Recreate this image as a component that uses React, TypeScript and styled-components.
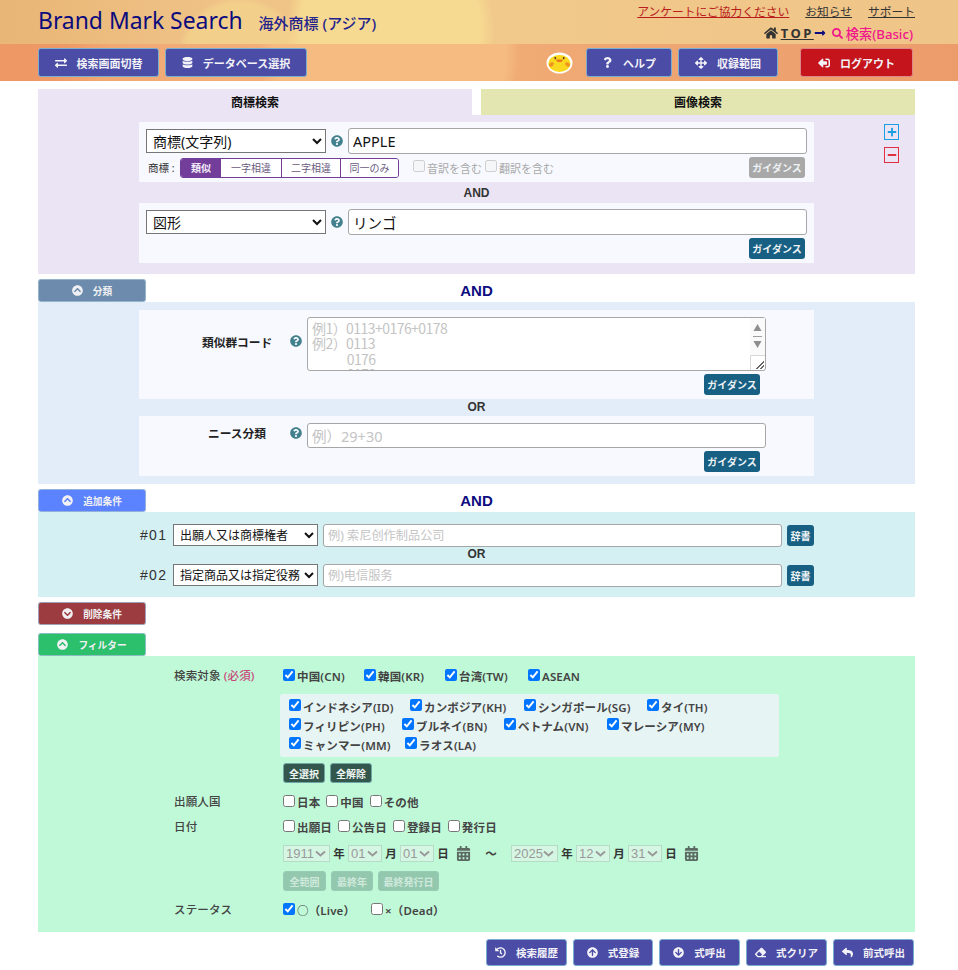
import React from 'react';
import styled, {createGlobalStyle} from 'styled-components';
import {
    FaArrowCircleDown, FaArrowCircleUp, FaArrowsAlt, FaCalendarAlt, FaChevronCircleDown, FaChevronCircleUp,
    FaDatabase, FaEraser, FaExchangeAlt, FaHistory, FaHome, FaLongArrowAltRight, FaMinus, FaPlus, FaQuestion,
    FaQuestionCircle, FaReply, FaSearch, FaSignOutAlt,
} from 'react-icons/fa';

const FONT = `"Noto Sans", "Noto Sans CJK JP", sans-serif`;

const GlobalStyle = createGlobalStyle`
    html, body {
        margin: 0;
        padding: 0;
        background: #fff;
    }

    body {
        font-family: ${FONT};
        color: #333;
    }

    * {
        box-sizing: border-box;
    }
`;

const Chick = () => (
    <svg width="27" height="22" viewBox="0 0 27 22">
        <ellipse cx="13.5" cy="11" rx="13" ry="10.5" fill="#fff"/>
        <ellipse cx="13.5" cy="11.5" rx="11" ry="8.5" fill="#fbd820"/>
        <path d="M2.8 13 C4 9.5 7 9.5 8 11.5 C7 15 4 16 2.8 13Z" fill="#ef9420"/>
        <path d="M24.2 13 C23 9.5 20 9.5 19 11.5 C20 15 23 16 24.2 13Z" fill="#ef9420"/>
        <rect x="8.5" y="5" width="1.6" height="2.2" fill="#5a4020"/>
        <rect x="16.9" y="5" width="1.6" height="2.2" fill="#5a4020"/>
        <path d="M9.8 7.5 H17.2 L15.5 10 H11.5Z" fill="#e87818"/>
    </svg>
);

const HeaderTop = styled.header`
    height: 44px;
    padding: 0 43px 0 38px;
    display: flex;
    justify-content: space-between;
    background:
        radial-gradient(circle at 390px 30px, #f7da92 0 90px, transparent 104px),
        radial-gradient(circle at 240px 60px, #f3cf8c 0 56px, transparent 64px),
        linear-gradient(90deg, #e8b676 0%, #eec083 18%, #f1ca8b 50%, #efc488 100%);
`;

const Brand = styled.div`
    display: flex;
    align-items: baseline;
    padding-top: 5px;
`;

const BrandName = styled.span`
    font-size: 22.9px;
    line-height: 32px;
    color: #0b0b7d;
`;

const BrandSub = styled.span`
    margin-left: 16px;
    font-size: 15px;
    font-weight: 500;
    color: #24248c;
`;

const HeaderRight = styled.div`
    display: flex;
    flex-direction: column;
    align-items: flex-end;
    padding-top: 1px;
`;

const TopLinks = styled.div`
    display: flex;
    gap: 16px;
    font-size: 11.75px;
    line-height: 20px;
`;

const TopLink = styled.a<{ $red?: boolean }>`
    color: ${p => (p.$red ? '#b81c1c' : '#333')};
    text-decoration: underline;
`;

const Crumbs = styled.div`
    display: flex;
    align-items: center;
    margin-top: 3px;
    padding-right: 2px;
    height: 18px;
    font-size: 13px;
    font-weight: 700;
    color: #333;
`;

const CrumbTop = styled.span`
    margin-left: 3px;
    letter-spacing: 2.5px;
    text-decoration: underline;
`;

const CrumbHere = styled.span`
    display: inline-flex;
    align-items: center;
    gap: 3px;
    margin-left: 6px;
    color: #f0168c;
    font-size: 13.2px;
    font-weight: 500;
`;

const HeaderBar = styled.nav`
    height: 37px;
    padding: 4px 45px 4px 38px;
    display: flex;
    align-items: stretch;
    background:
        radial-gradient(circle at 20px 0, #ee9866 0 40px, transparent 90px),
        radial-gradient(circle at 390px 10px, #f5bb80 0 116px, transparent 130px),
        linear-gradient(90deg, #f0a470 0%, #f3b27c 35%, #f0aa74 55%, #ec9c6b 100%);
`;

const BarGroup = styled.div`
    display: flex;
    gap: 6px;
    align-items: stretch;
`;

const LogoutGroup = styled(BarGroup)`
    margin-left: 22px;
`;

const Spacer = styled.div`
    flex: 1;
`;

const ChickHolder = styled.div`
    display: flex;
    align-items: center;
    margin-right: 13px;
`;

const NavButton = styled.button<{ $width: number; $danger?: boolean }>`
    width: ${p => p.$width}px;
    display: flex;
    align-items: center;
    justify-content: center;
    gap: 10px;
    padding: 0;
    border: 1px solid ${p => (p.$danger ? '#d88' : '#78aed0')};
    border-radius: 3px;
    background: ${p => (p.$danger ? '#c5141c' : '#4b4ca5')};
    color: #f2f2f8;
    font-family: ${FONT};
    font-size: 11px;
    font-weight: 700;
`;

const LogoutIcon = styled(FaSignOutAlt)`
    transform: scaleX(-1);
`;

const Main = styled.main`
    width: 877px;
    margin-left: 38px;
`;

const Tabs = styled.div`
    margin-top: 8px;
    display: flex;
    justify-content: space-between;
`;

const Tab = styled.div<{ $bg: string }>`
    width: 434px;
    height: 26px;
    display: flex;
    align-items: center;
    justify-content: center;
    background: ${p => p.$bg};
    font-size: 12px;
    font-weight: 700;
    color: #111;
`;

const Panel = styled.section<{ $bg: string; $height: number }>`
    height: ${p => p.$height}px;
    background: ${p => p.$bg};
    padding-left: 101px;
`;

const TrademarkPanel = styled(Panel)`
    display: flex;
    padding-top: 7px;
`;

const ClassPanel = styled(Panel)`
    padding-top: 8px;
`;

const Column = styled.div`
    width: 675px;
`;

const Box = styled.div<{ $height: number }>`
    height: ${p => p.$height}px;
    background: #f7f9fe;
    padding: 6px 7px 0;
`;

const Row = styled.div`
    display: flex;
    align-items: center;
`;

const FieldSelect = styled.select`
    width: 180px;
    height: 24px;
    font-family: ${FONT};
    font-size: 14px;
    color: #111;
    background: #fff;
    border: 1px solid #767676;
    padding: 0 0 0 2px;
`;

const HelpIcon = styled.span`
    display: inline-flex;
    margin: 0 5px 0 5px;
    color: #41808c;
    font-size: 12px;
`;

const TextField = styled.input`
    height: 26px;
    flex: 1;
    min-width: 0;
    border: 1px solid #a6a6a6;
    border-radius: 3px;
    padding: 0 4px;
    font-family: ${FONT};
    font-size: 14.5px;
    color: #111;
    background: #fff;

    &::placeholder {
        color: #c4c4c4;
    }
`;

const OptionRow = styled.div`
    display: flex;
    align-items: center;
    height: 23px;
    margin-top: 2px;
    font-size: 11px;
`;

const OptionLabel = styled.span`
    width: 34px;
    padding-left: 2px;
    color: #333;
    font-size: 10.5px;
    white-space: nowrap;
`;

const Segments = styled.div`
    display: flex;
    height: 20px;
    border: 1px solid #723e9a;
    border-radius: 3px;
    overflow: hidden;
    background: #fff;
`;

const Segment = styled.span<{ $on?: boolean; $width: number }>`
    width: ${p => p.$width}px;
    display: flex;
    align-items: center;
    justify-content: center;
    font-size: 10px;
    font-weight: ${p => (p.$on ? 700 : 400)};
    color: ${p => (p.$on ? '#f3eef8' : '#6b5a80')};
    background: ${p => (p.$on ? '#723e9a' : '#fff')};
    border-left: ${p => (p.$on ? 'none' : '1px solid #723e9a')};

    &:nth-child(2) {
        border-left: none;
    }
`;

const OffCheck = styled.label`
    display: inline-flex;
    align-items: center;
    gap: 2px;
    font-size: 11px;
    color: #a9a9a9;
    margin-left: 3px;

    &:first-of-type {
        margin-left: 14px;
    }
`;

const GuideButton = styled.button<{ $off?: boolean }>`
    flex: none;
    width: 56px;
    height: 21px;
    padding: 0;
    border: none;
    border-radius: 3px;
    background: ${p => (p.$off ? '#a8a8a8' : '#186083')};
    color: #eef3f6;
    font-family: ${FONT};
    font-size: 10px;
    font-weight: 700;
    white-space: nowrap;
`;

const PushRight = styled.div`
    margin-left: auto;
    padding-right: 2px;
`;

const GuideRow = styled.div<{ $right?: number }>`
    display: flex;
    justify-content: flex-end;
    margin-top: 3px;
    padding-right: ${p => p.$right ?? 2}px;
`;

const Joiner = styled.div<{ $height: number; $lift?: number }>`
    height: ${p => p.$height}px;
    padding-bottom: ${p => p.$lift ?? 0}px;
    display: flex;
    align-items: center;
    justify-content: center;
    font-family: "Liberation Sans", sans-serif;
    font-weight: 700;
    font-size: 12px;
    color: #333;
`;

const ExtraJoiner = styled(Joiner)`
    width: 675px;
`;

const SideTools = styled.div`
    display: flex;
    flex-direction: column;
    gap: 7px;
    margin: 2px 0 0 70px;
`;

const SideTool = styled.span<{ $color: string }>`
    width: 15px;
    height: 16px;
    display: flex;
    align-items: center;
    justify-content: center;
    font-size: 10px;
    color: ${p => p.$color};
    border: 1px solid ${p => p.$color};
`;

const SectionBar = styled.div<{ $top?: number }>`
    display: grid;
    grid-template-columns: 108px 1fr 108px;
    align-items: center;
    margin-top: ${p => p.$top ?? 5}px;
    height: 23px;
`;

const SectionAnd = styled.div`
    text-align: center;
    font-family: "Liberation Sans", sans-serif;
    font-size: 15px;
    font-weight: 700;
    color: #0c0c80;
`;

const Toggle = styled.button<{ $bg: string }>`
    height: 23px;
    display: flex;
    align-items: center;
    justify-content: center;
    gap: 10px;
    padding: 0;
    border: 1px solid rgba(160, 190, 210, 0.8);
    border-radius: 3px;
    background: ${p => p.$bg};
    color: #f1f1f4;
    font-family: ${FONT};
    font-size: 9.7px;
    font-weight: 700;
    width: 108px;
`;

const ClassBox = styled(Box)`
    padding: 7px 48px 0 0;
`;

const ClassRow = styled.div`
    display: grid;
    grid-template-columns: 133px 35px 1fr;
`;

const ClassLabel = styled.div`
    padding-left: 63px;
    margin-bottom: 6px;
    font-size: 11.7px;
    font-weight: 700;
    color: #222;
    text-align: center;
    align-self: center;
    white-space: nowrap;
`;

const ClassHelp = styled(HelpIcon)`
    margin: 0 0 6px 18px;
    align-self: center;
`;

const CodeWrap = styled.div`
    position: relative;
    width: 459px;
    height: 54px;
`;

const CodeArea = styled.textarea`
    display: block;
    width: 459px;
    height: 54px;
    border: 1px solid #a6a6a6;
    border-radius: 3px;
    padding: 3px 4px 0;
    overflow: hidden;
    font-family: "Liberation Sans Narrow", "Noto Sans CJK JP", sans-serif;
    font-size: 14px;
    line-height: 15.3px;
    letter-spacing: -0.55px;
    background: #fff;

    &::placeholder {
        color: #c4c4c4;
    }
`;

const ScrollArrows = styled.svg`
    position: absolute;
    top: 1px;
    right: 1px;
    pointer-events: none;
`;

const ClassInput = styled(TextField)`
    display: block;
    flex: none;
    width: 459px;
    height: 25px;
`;

const ExtraPanel = styled(Panel)`
    padding-top: 11px;
`;

const ExtraRow = styled.div`
    display: flex;
    align-items: center;
    width: 675px;
    height: 24px;
`;

const RowNumber = styled.span`
    width: 34px;
    padding-left: 1px;
    font-family: "Liberation Sans", sans-serif;
    font-size: 14px;
    letter-spacing: 1.3px;
    color: #333;
`;

const ExtraSelect = styled(FieldSelect)`
    width: 145px;
    height: 22px;
    font-size: 12px;
    padding-left: 2px;
    margin-right: 5px;
`;

const ExtraInput = styled(TextField)`
    height: 23px;
    font-size: 12.2px;
    margin-right: 5px;
`;

const DictButton = styled(GuideButton)`
    width: 27px;
    height: 21px;
`;

const FilterPanel = styled.section`
    height: 276px;
    background: #c0f9d8;
    padding: 10px 0 0 136px;
    font-size: 11.5px;
    font-weight: 600;
    letter-spacing: 0.15px;
    color: #444;
`;

const FilterRow = styled.div<{ $height: number }>`
    display: grid;
    grid-template-columns: 109px 1fr;
    min-height: ${p => p.$height}px;
`;

const FilterLabel = styled.div`
    font-size: 11.5px;
    font-weight: 500;
    line-height: 20px;
    color: #444;
`;

const Required = styled.span`
    color: #c8487a;
`;

const ChecksLine = styled.div<{ $height?: number }>`
    display: flex;
    align-items: center;
    height: ${p => p.$height ?? 20}px;
`;

const Check = styled.label<{ $width?: number }>`
    display: inline-flex;
    align-items: center;
    gap: 2px;
    width: ${p => (p.$width ? `${p.$width}px` : 'auto')};
    margin-right: ${p => (p.$width ? 0 : 6)}px;
    white-space: nowrap;
`;

const CheckBox = styled.input`
    width: 12px;
    height: 12px;
    margin: 0 0 3px;
    flex: none;
`;

const CountryBox = styled.div`
    width: 499px;
    height: 63px;
    margin: 8px 0 6px -3px;
    padding: 3px 0 0 9px;
    background: #e7f4f4;
    border-radius: 3px;
`;

const CountryLine = styled(ChecksLine)`
    height: 19px;
`;

const SmallButtons = styled.div`
    display: flex;
    gap: 5px;
`;

const SmallButton = styled.button<{ $width: number; $off?: boolean }>`
    width: ${p => p.$width}px;
    height: 20px;
    padding: 0;
    border: 1px solid ${p => (p.$off ? '#98cbb3' : '#6fa7a8')};
    border-radius: 3px;
    background: ${p => (p.$off ? '#94c8ae' : '#33574d')};
    color: ${p => (p.$off ? '#cfe8dc' : '#eef4f1')};
    font-family: ${FONT};
    font-size: 10px;
    font-weight: 700;
    white-space: nowrap;
`;

const DateLine = styled.div`
    display: flex;
    align-items: center;
    height: 16px;
    margin: 8px 0 10px;
    font-size: 11.5px;
`;

const DateSelect = styled.select<{ $width: number }>`
    width: ${p => p.$width}px;
    height: 17px;
    padding: 0 0 0 2px;
    appearance: none;
    font-family: "Liberation Sans", sans-serif;
    font-size: 13px;
    color: #9a9a9a;
    background: #d6f6e4 url("data:image/svg+xml,%3Csvg xmlns='http://www.w3.org/2000/svg' width='11' height='7'%3E%3Cpath d='M1 1.5l4.5 4 4.5-4' fill='none' stroke='%23999' stroke-width='2'/%3E%3C/svg%3E") no-repeat right 3px center;
    border: 1px solid #b6dcc8;
    opacity: 1;
`;

const DateUnit = styled.span<{ $gap?: number }>`
    width: ${p => p.$gap ?? 18}px;
    text-align: center;
    color: #333;
`;

const CalendarIcon = styled.span`
    display: inline-flex;
    margin: 0 0 0 4px;
    font-size: 15px;
    color: #5b6a62;
`;

const Tilde = styled.span`
    width: 40px;
    text-align: center;
    color: #444;
`;

const FooterButtons = styled.footer`
    display: flex;
    justify-content: flex-end;
    gap: 6px;
    margin: 7px 1px 0 0;
`;

const FootButton = styled(NavButton)`
    height: 27px;
    font-size: 10.5px;
`;

const GuideText = 'ガイダンス';

type ToggleProps = { bg: string; label: string; down?: boolean };

const SectionToggle = ({bg, label, down}: ToggleProps) => (
    <Toggle $bg={bg}>
        {down ? <FaChevronCircleDown size={11}/> : <FaChevronCircleUp size={11}/>}
        {label}
    </Toggle>
);

const CountryCheck = ({label, width}: { label: string; width: number }) => (
    <Check $width={width}>
        <CheckBox type="checkbox" defaultChecked/>
        {label}
    </Check>
);

const PlainCheck = ({label, on}: { label: string; on?: boolean }) => (
    <Check>
        <CheckBox type="checkbox" defaultChecked={on}/>
        {label}
    </Check>
);

const numbers = (value: string) => (
    <option>{value}</option>
);

export default function App() {
    return (
        <>
            <GlobalStyle/>
            <HeaderTop>
                <Brand>
                    <BrandName>Brand Mark Search</BrandName>
                    <BrandSub>海外商標 (アジア)</BrandSub>
                </Brand>
                <HeaderRight>
                    <TopLinks>
                        <TopLink $red>アンケートにご協力ください</TopLink>
                        <TopLink>お知らせ</TopLink>
                        <TopLink>サポート</TopLink>
                    </TopLinks>
                    <Crumbs>
                        <FaHome size={14}/>
                        <CrumbTop>TOP</CrumbTop>
                        <FaLongArrowAltRight size={12} color="#0c0c80"/>
                        <CrumbHere><FaSearch size={11}/>検索(Basic)</CrumbHere>
                    </Crumbs>
                </HeaderRight>
            </HeaderTop>
            <HeaderBar>
                <BarGroup>
                    <NavButton $width={121}><FaExchangeAlt size={12}/>検索画面切替</NavButton>
                    <NavButton $width={142}><FaDatabase size={11}/>データベース選択</NavButton>
                </BarGroup>
                <Spacer/>
                <ChickHolder><Chick/></ChickHolder>
                <BarGroup>
                    <NavButton $width={86}><FaQuestion size={11}/>ヘルプ</NavButton>
                    <NavButton $width={100}><FaArrowsAlt size={12}/>収録範囲</NavButton>
                </BarGroup>
                <LogoutGroup>
                    <NavButton $width={113} $danger><LogoutIcon size={12}/>ログアウト</NavButton>
                </LogoutGroup>
            </HeaderBar>
            <Main>
                <Tabs>
                    <Tab $bg="#ebe4f4">商標検索</Tab>
                    <Tab $bg="#e3e6b0">画像検索</Tab>
                </Tabs>
                <TrademarkPanel $bg="#ebe4f4" $height={159}>
                    <Column>
                        <Box $height={60}>
                            <Row>
                                <FieldSelect defaultValue="商標(文字列)"><option>商標(文字列)</option></FieldSelect>
                                <HelpIcon><FaQuestionCircle/></HelpIcon>
                                <TextField defaultValue="APPLE"/>
                            </Row>
                            <OptionRow>
                                <OptionLabel>商標 :</OptionLabel>
                                <Segments>
                                    <Segment $on $width={40}>類似</Segment>
                                    <Segment $width={60}>一字相違</Segment>
                                    <Segment $width={59}>二字相違</Segment>
                                    <Segment $width={58}>同一のみ</Segment>
                                </Segments>
                                <OffCheck><CheckBox type="checkbox" disabled/>音訳を含む</OffCheck>
                                <OffCheck><CheckBox type="checkbox" disabled/>翻訳を含む</OffCheck>
                                <PushRight><GuideButton $off>{GuideText}</GuideButton></PushRight>
                            </OptionRow>
                        </Box>
                        <Joiner $height={21}>AND</Joiner>
                        <Box $height={60}>
                            <Row>
                                <FieldSelect defaultValue="図形"><option>図形</option></FieldSelect>
                                <HelpIcon><FaQuestionCircle/></HelpIcon>
                                <TextField defaultValue="リンゴ"/>
                            </Row>
                            <GuideRow><GuideButton>{GuideText}</GuideButton></GuideRow>
                        </Box>
                    </Column>
                    <SideTools>
                        <SideTool $color="#1a9fe0"><FaPlus/></SideTool>
                        <SideTool $color="#e03040"><FaMinus/></SideTool>
                    </SideTools>
                </TrademarkPanel>

                <SectionBar>
                    <SectionToggle bg="#6c8bad" label="分類"/>
                    <SectionAnd>AND</SectionAnd>
                </SectionBar>
                <ClassPanel $bg="#e3edf9" $height={182}>
                    <Column>
                        <ClassBox $height={89}>
                            <ClassRow>
                                <ClassLabel>類似群コード</ClassLabel>
                                <ClassHelp><FaQuestionCircle/></ClassHelp>
                                <CodeWrap>
                                    <CodeArea placeholder={'例1）0113+0176+0178\n例2）0113\n　　   0176\n　　   0178'}/>
                                    <ScrollArrows width="15" height="52" viewBox="0 0 15 52">
                                        <rect width="15" height="37" fill="#fafafa"/>
                                        <path d="M3.5 13 L7.5 6 L11.5 13Z" fill="#8e8e8e"/>
                                        <rect x="3" y="18" width="9" height="1" fill="#a0a0a0"/>
                                        <path d="M3.5 23 H11.5 L7.5 30Z" fill="#8e8e8e"/>
                                        <path d="M0.5 52 V37.5 H15" fill="#fff" stroke="#d8d8d8"/>
                                        <path d="M6 51 L14 43 M10 51 L14 47" stroke="#666" strokeWidth="1"/>
                                    </ScrollArrows>
                                </CodeWrap>
                            </ClassRow>
                            <GuideRow $right={6}><GuideButton>{GuideText}</GuideButton></GuideRow>
                        </ClassBox>
                        <Joiner $height={17} $lift={2}>OR</Joiner>
                        <ClassBox $height={60}>
                            <ClassRow>
                                <ClassLabel>ニース分類</ClassLabel>
                                <ClassHelp><FaQuestionCircle/></ClassHelp>
                                <ClassInput placeholder="例）29+30"/>
                            </ClassRow>
                            <GuideRow $right={6}><GuideButton>{GuideText}</GuideButton></GuideRow>
                        </ClassBox>
                    </Column>
                </ClassPanel>

                <SectionBar>
                    <SectionToggle bg="#5b82ff" label="追加条件"/>
                    <SectionAnd>AND</SectionAnd>
                </SectionBar>
                <ExtraPanel $bg="#d4f0f3" $height={85}>
                    <ExtraRow>
                        <RowNumber>#01</RowNumber>
                        <ExtraSelect><option>出願人又は商標権者</option></ExtraSelect>
                        <ExtraInput placeholder="例) 索尼创作制品公司"/>
                        <DictButton>辞書</DictButton>
                    </ExtraRow>
                    <ExtraJoiner $height={16} $lift={2}>OR</ExtraJoiner>
                    <ExtraRow>
                        <RowNumber>#02</RowNumber>
                        <ExtraSelect><option>指定商品又は指定役務</option></ExtraSelect>
                        <ExtraInput placeholder="例)电信服务"/>
                        <DictButton>辞書</DictButton>
                    </ExtraRow>
                </ExtraPanel>

                <SectionBar>
                    <SectionToggle bg="#9c3b40" label="削除条件" down/>
                </SectionBar>
                <SectionBar $top={8}>
                    <SectionToggle bg="#2cbf6c" label="フィルター"/>
                </SectionBar>
                <FilterPanel>
                    <FilterRow $height={126}>
                        <FilterLabel>検索対象 <Required>(必須)</Required></FilterLabel>
                        <div>
                            <ChecksLine>
                                <CountryCheck label="中国(CN)" width={81}/>
                                <CountryCheck label="韓国(KR)" width={81}/>
                                <CountryCheck label="台湾(TW)" width={83}/>
                                <CountryCheck label="ASEAN" width={70}/>
                            </ChecksLine>
                            <CountryBox>
                                <CountryLine>
                                    <CountryCheck label="インドネシア(ID)" width={121}/>
                                    <CountryCheck label="カンボジア(KH)" width={114}/>
                                    <CountryCheck label="シンガポール(SG)" width={123}/>
                                    <CountryCheck label="タイ(TH)" width={80}/>
                                </CountryLine>
                                <CountryLine>
                                    <CountryCheck label="フィリピン(PH)" width={113}/>
                                    <CountryCheck label="ブルネイ(BN)" width={102}/>
                                    <CountryCheck label="ベトナム(VN)" width={103}/>
                                    <CountryCheck label="マレーシア(MY)" width={110}/>
                                </CountryLine>
                                <CountryLine>
                                    <CountryCheck label="ミャンマー(MM)" width={116}/>
                                    <CountryCheck label="ラオス(LA)" width={90}/>
                                </CountryLine>
                            </CountryBox>
                            <SmallButtons>
                                <SmallButton $width={42}>全選択</SmallButton>
                                <SmallButton $width={42}>全解除</SmallButton>
                            </SmallButtons>
                        </div>
                    </FilterRow>
                    <FilterRow $height={25}>
                        <FilterLabel>出願人国</FilterLabel>
                        <ChecksLine>
                            <PlainCheck label="日本"/>
                            <PlainCheck label="中国"/>
                            <PlainCheck label="その他"/>
                        </ChecksLine>
                    </FilterRow>
                    <FilterRow $height={83}>
                        <FilterLabel>日付</FilterLabel>
                        <div>
                            <ChecksLine>
                                <PlainCheck label="出願日"/>
                                <PlainCheck label="公告日"/>
                                <PlainCheck label="登録日"/>
                                <PlainCheck label="発行日"/>
                            </ChecksLine>
                            <DateLine>
                                <DateSelect $width={47} disabled>{numbers('1911')}</DateSelect>
                                <DateUnit>年</DateUnit>
                                <DateSelect $width={34} disabled>{numbers('01')}</DateSelect>
                                <DateUnit>月</DateUnit>
                                <DateSelect $width={34} disabled>{numbers('01')}</DateSelect>
                                <DateUnit>日</DateUnit>
                                <CalendarIcon><FaCalendarAlt/></CalendarIcon>
                                <Tilde>～</Tilde>
                                <DateSelect $width={47} disabled>{numbers('2025')}</DateSelect>
                                <DateUnit>年</DateUnit>
                                <DateSelect $width={34} disabled>{numbers('12')}</DateSelect>
                                <DateUnit>月</DateUnit>
                                <DateSelect $width={34} disabled>{numbers('31')}</DateSelect>
                                <DateUnit>日</DateUnit>
                                <CalendarIcon><FaCalendarAlt/></CalendarIcon>
                            </DateLine>
                            <SmallButtons>
                                <SmallButton $off $width={43}>全範囲</SmallButton>
                                <SmallButton $off $width={42}>最終年</SmallButton>
                                <SmallButton $off $width={61}>最終発行日</SmallButton>
                            </SmallButtons>
                        </div>
                    </FilterRow>
                    <FilterRow $height={20}>
                        <FilterLabel>ステータス</FilterLabel>
                        <ChecksLine>
                            <Check $width={88}><CheckBox type="checkbox" defaultChecked/>○（Live）</Check>
                            <Check><CheckBox type="checkbox"/>×（Dead）</Check>
                        </ChecksLine>
                    </FilterRow>
                </FilterPanel>
                <FooterButtons>
                    <FootButton $width={81}><FaHistory size={11}/>検索履歴</FootButton>
                    <FootButton $width={80}><FaArrowCircleUp size={11}/>式登録</FootButton>
                    <FootButton $width={81}><FaArrowCircleDown size={11}/>式呼出</FootButton>
                    <FootButton $width={81}><FaEraser size={11}/>式クリア</FootButton>
                    <FootButton $width={81}><FaReply size={11}/>前式呼出</FootButton>
                </FooterButtons>
            </Main>
        </>
    );
}
